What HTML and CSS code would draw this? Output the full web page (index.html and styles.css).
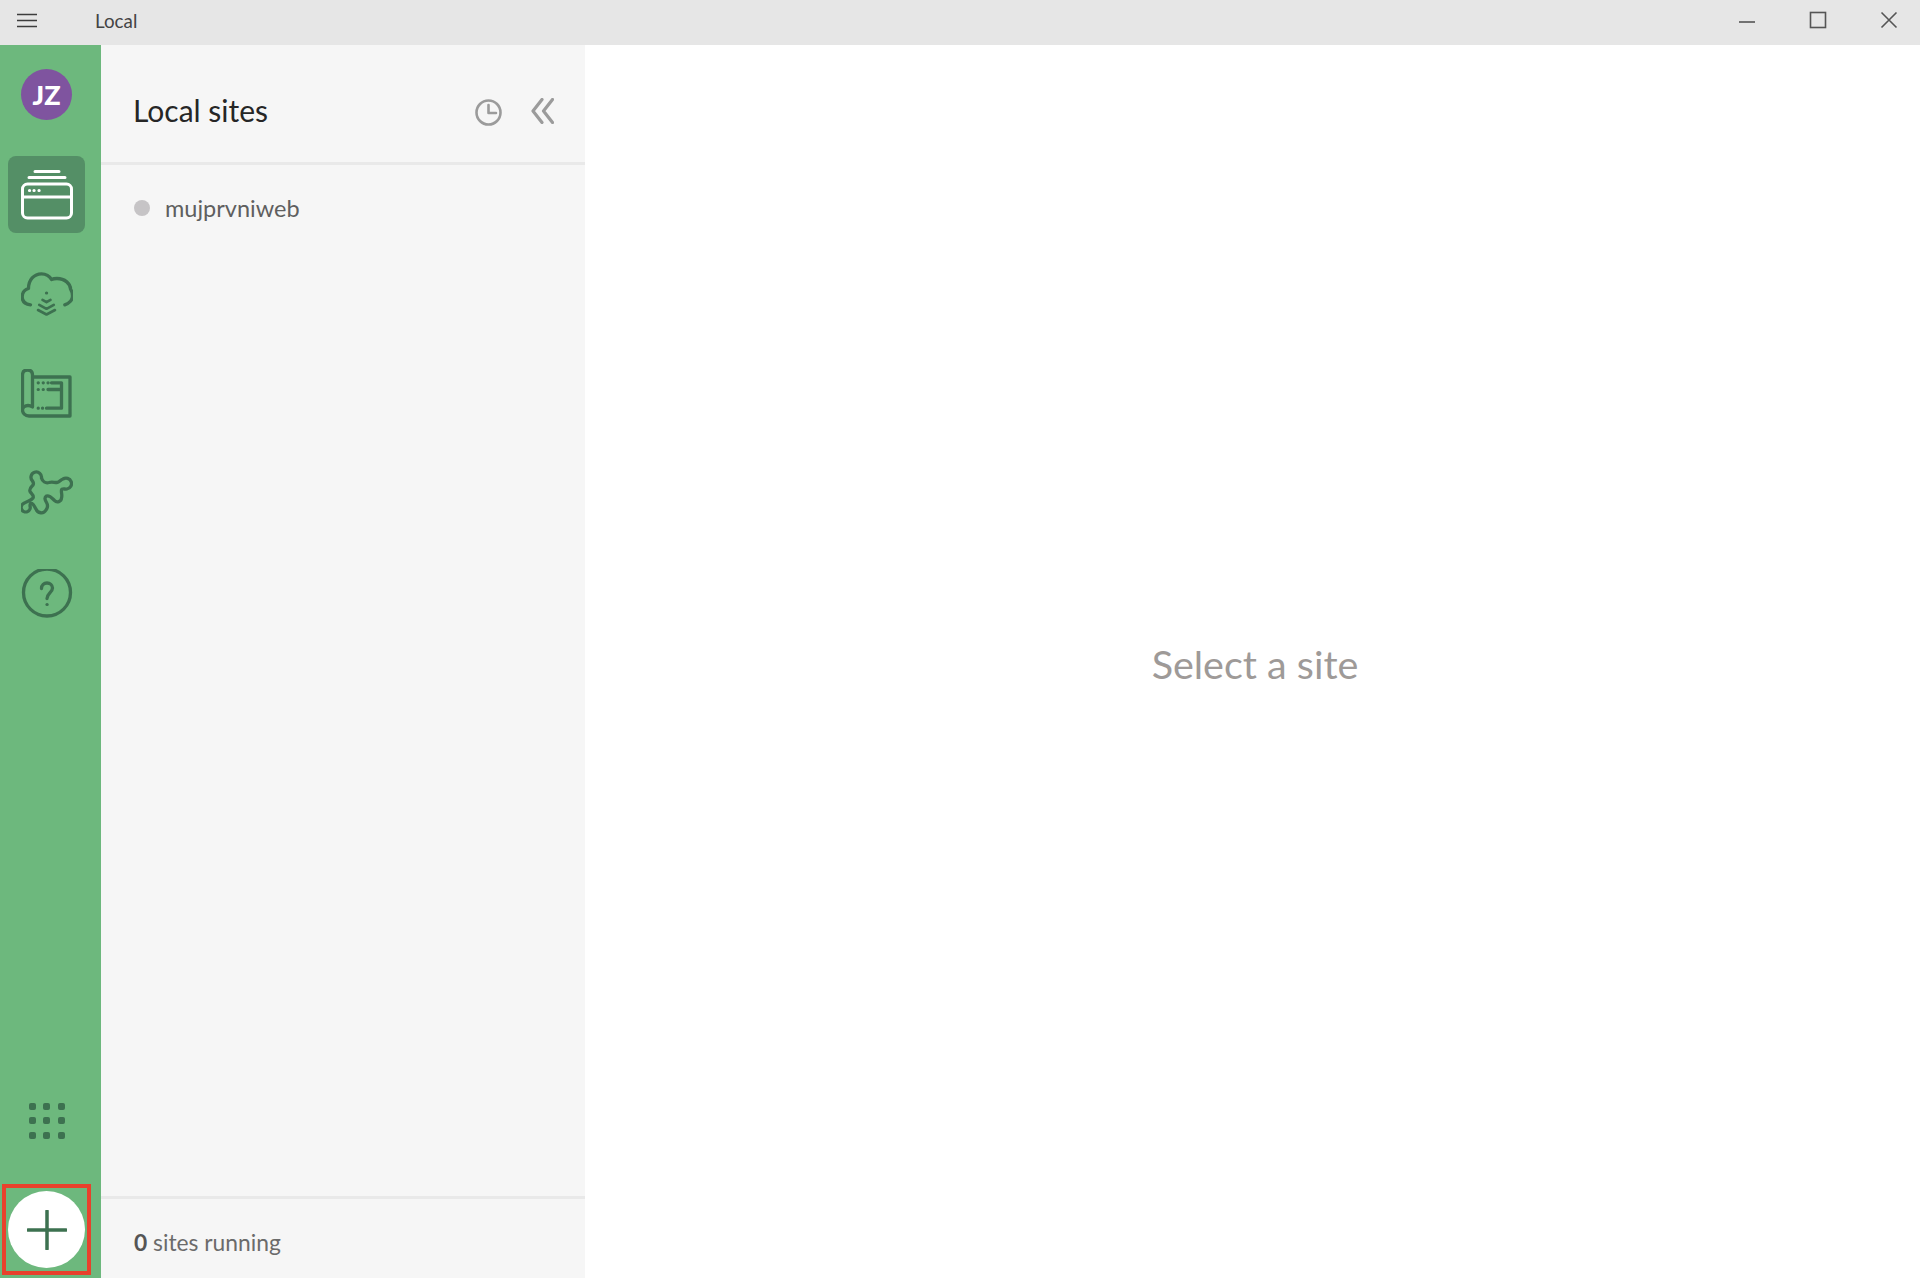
FILE: index.html
```html
<!DOCTYPE html>
<html lang="en">
<head>
<meta charset="utf-8">
<title>Local</title>
<link rel="stylesheet" href="styles.css">
</head>
<body>
<div class="app">
  <header class="titlebar">
    <svg class="menu-icon" width="20" height="15" viewBox="0 0 20 15"><path d="M0 1.5h20M0 7.5h20M0 13.5h20"/></svg>
    <span class="app-title">Local</span>
    <div class="window-controls">
      <svg width="18" height="18" viewBox="0 0 18 18"><path d="M1 11h16"/></svg>
      <svg width="18" height="18" viewBox="0 0 18 18"><rect x="1.5" y="1.5" width="15" height="15"/></svg>
      <svg width="18" height="18" viewBox="0 0 18 18"><path d="M1.5 1.5l15 15M16.5 1.5l-15 15"/></svg>
    </div>
  </header>
  <div class="body">
    <nav class="rail">
      <div class="avatar">JZ</div>
      <div class="rail-item active">
        <svg width="52" height="52" viewBox="0 0 52 52" class="icon-light">
          <path d="M14 2.500h24M8 8.500h36"/>
          <rect x="1.500" y="15" width="49" height="34" rx="5"/>
          <path d="M1.500 28h49"/>
          <path class="dots" d="M8.500 21.500h.1M13 21.500h.1M18 21.500h.1"/>
        </svg>
      </div>
      <div class="rail-item">
        <svg width="52" height="52" viewBox="0 0 52 52" class="icon-dark">
          <path d="M9.500 35.800C4 35 1.200 32 1.200 28C1.200 23.500 4 20.500 7.500 19.500C7.500 11 13 4.800 20.500 4.800C25 4.800 28.500 7 30.500 10.500C32 9.800 34 9.500 36 9.500C44 9.500 49.500 15 49.500 20C51 22.500 51.500 25 51.500 27C51.500 31 48 34.500 43.800 35.800"/>
          <path class="dots" d="M25.500 24h.1" stroke-width="4.500"/>
          <path class="thin" d="M21.500 30.800l4 2.400 4-2.400M18.200 35.800l7.300 4 7.300-4M17 41l8.500 4.500 8.500-4.500"/>
        </svg>
      </div>
      <div class="rail-item">
        <svg width="52" height="52" viewBox="0 0 52 52" class="icon-dark">
          <path d="M11.500 8H49V47H8C4 47 1.500 44 1.500 41V6C1.500 2.500 3.500 1 6.500 1S11.500 2.500 11.500 6V38C10 37 8.500 36.500 7 36.500C4 36.500 1.500 38.500 1.500 41"/>
          <path d="M30.500 13.800H40.500V39.200H25.500M27 20.500H40.500"/>
          <path class="dots" d="M17.200 13.800h.1M22.200 13.800h.1M27 13.800h.1M17.200 20.500h.1M22.200 20.500h.1M17.200 39.200h.1M21.500 39.200h.1"/>
        </svg>
      </div>
      <div class="rail-item">
        <svg width="52" height="52" viewBox="0 0 52 52" class="icon-dark">
          <path transform="translate(0 1)" d="M11.500 11A5.300 5.300 0 1 1 20.500 8C21.500 11.500 24.500 13.500 28 12.500C31 11.500 33 12.500 36 12.500C38.500 12.500 39.500 9.500 42 9A5.500 5.500 0 1 1 46 19C44 19.500 41 18 40.500 20C40 23 41.500 25 40.500 28A4 4 0 0 1 33.500 30.500C31 28 28.500 25 25.500 26C23 27.500 24 30 25.500 32.500C27 35 26.500 38 25 40A5.500 5.500 0 0 1 15 39C13.500 37 13 34.500 11 33.500C9.500 33 9 34 9 36A4.500 4.500 0 1 1 3 33.300C6 31 10 31 12 28C13.500 25.500 10 23.500 9 21.500C8 18.500 10.500 16.500 12 15C13 13.500 12.500 12.500 11.500 11Z"/>
        </svg>
      </div>
      <div class="rail-item">
        <svg width="52" height="52" viewBox="0 0 52 52" class="icon-dark">
          <circle cx="26" cy="23.500" r="23.500"/>
          <path d="M20.500 19.500C20.500 16 23 14 26 14S31.500 16 31.500 19C31.500 23.500 26 24.500 26 29.500"/>
          <path class="dots" d="M26 35.500h.1" stroke-width="4"/>
        </svg>
      </div>
      <div class="apps-grid">
        <i></i><i></i><i></i><i></i><i></i><i></i><i></i><i></i><i></i>
      </div>
      <div class="add-btn">
        <svg width="40" height="40" viewBox="0 0 40 40"><path d="M20 1v38M1 20h38"/></svg>
        <span class="highlight"></span>
      </div>
    </nav>
    <aside class="panel">
      <div class="panel-head">
        <h1 class="panel-title">Local sites</h1>
        <svg class="head-icon" width="27" height="27" viewBox="0 0 27 27"><circle cx="13.500" cy="13.500" r="12"/><path d="M13.500 6v8h7.500"/></svg>
        <svg class="head-icon chevrons" width="23" height="26" viewBox="0 0 23 26"><path d="M11 1.500L2 13l9 11.500M21.500 1.500L12.500 13l9 11.500"/></svg>
      </div>
      <div class="site-list">
        <div class="site"><span class="status-dot"></span><span>mujprvniweb</span></div>
      </div>
      <div class="panel-foot"><b>0</b> sites running</div>
    </aside>
    <main class="content">Select a site</main>
  </div>
</div>
</body>
</html>
```
FILE: styles.css
```css
* { box-sizing: border-box; }
html, body { margin: 0; height: 100%; }
body { font-family: Lato, "Open Sans", sans-serif; background: #fff; overflow: hidden; }
svg { display: block; fill: none; }
.app { height: 1278px; display: flex; flex-direction: column; }

.titlebar { height: 45px; background: #e6e6e6; display: flex; align-items: center; padding-left: 17px; flex: none; }
.menu-icon { stroke: #3d3d3d; stroke-width: 1.500; margin-top: -5px; }
.app-title { margin-left: 58px; font-size: 18.800px; color: #444; margin-top: -5px; }
.window-controls { margin-left: auto; display: flex; gap: 53px; padding-right: 22px; margin-top: -5px; }
.window-controls svg { stroke: #555; stroke-width: 1.600; }

.body { flex: 1; display: flex; min-height: 0; }

.rail { width: 101px; flex: none; background: #6db87d; display: flex; flex-direction: column; align-items: center; padding: 24px 8px 10px 0; position: relative; }
.avatar { width: 51px; height: 51px; border-radius: 50%; background: #7f549f; color: #fff; font: 900 27px Lato, sans-serif; display: flex; align-items: center; justify-content: center; margin-bottom: 36px; flex: none; }
.rail-item { width: 77px; height: 77px; border-radius: 8px; display: flex; align-items: center; justify-content: center; margin-bottom: 23px; flex: none; }
.rail-item.active { background: #548f66; }
.icon-light { stroke: #fff; stroke-width: 3; stroke-linecap: round; stroke-linejoin: round; }
.icon-dark { stroke: #3d7150; stroke-width: 3.300; stroke-linecap: round; stroke-linejoin: round; }
.dots { stroke-width: 3.200; }
.thin { stroke-width: 2.600; }

.apps-grid { margin-top: auto; display: grid; grid-template-columns: repeat(3, 7px); gap: 7.500px; margin-bottom: 52.500px; }
.apps-grid i { width: 7px; height: 7px; border-radius: 2px; background: #3d7150; }

.add-btn { width: 77px; height: 77px; border-radius: 50%; background: #fff; display: flex; align-items: center; justify-content: center; position: relative; flex: none; }
.add-btn svg { stroke: #3d7150; stroke-width: 3.500; stroke-linecap: round; }
.highlight { position: absolute; left: -6px; top: -7px; width: 89px; height: 91px; border: 4px solid #e8412c; }

.panel { width: 484px; flex: none; background: #f6f6f6; display: flex; flex-direction: column; }
.panel-head { height: 120px; border-bottom: 3px solid #e9e9e9; display: flex; align-items: center; padding: 12px 31px 0 32px; flex: none; }
.panel-title { margin: 0 auto 0 0; font-size: 30px; font-weight: 400; color: #262626; }
.head-icon { stroke: #9b9b9b; stroke-width: 2.600; stroke-linecap: round; stroke-linejoin: round; margin-top: 5px; }
.chevrons { margin-left: 29px; margin-top: 2px; stroke-width: 3.200; }
.site-list { flex: 1; padding: 27px 33px; }
.site { display: flex; align-items: center; gap: 15px; font-size: 23.500px; color: #5f5f5f; height: 32px; }
.status-dot { width: 16px; height: 16px; border-radius: 50%; background: #c6c4c6; flex: none; }
.panel-foot { height: 82px; border-top: 3px solid #e9e9e9; padding: 29px 0 0 33px; font-size: 22.800px; color: #6b6b6b; flex: none; }
.panel-foot b { font-weight: 700; color: #555; }

.content { flex: 1; display: flex; align-items: center; justify-content: center; font-size: 39.500px; color: #9e9a98; padding: 4px 0 0 5px; }
```
